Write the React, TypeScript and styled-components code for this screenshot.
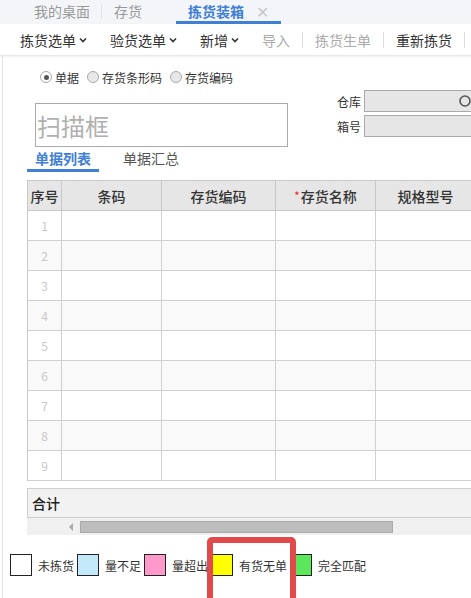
import styled, { createGlobalStyle } from "styled-components";

const GlobalStyle = createGlobalStyle`
  html, body {
    margin: 0;
    padding: 0;
    background: #fff;
  }
  body {
    font-family: "Noto Sans CJK SC", "Noto Sans", sans-serif;
    color: #333;
    width: 471px;
    height: 598px;
    overflow: hidden;
  }
`;

const Page = styled.div`
  position: relative;
  width: 471px;
  height: 598px;
  overflow: hidden;
`;

const TabBar = styled.div`
  height: 24px;
  background: #f3f5f9;
  display: flex;
  align-items: stretch;
  padding-left: 22px;
  font-size: 14px;
`;

const Tab = styled.div<{ $active?: boolean; $sep?: boolean }>`
  display: flex;
  align-items: center;
  gap: 12px;
  padding: 0 12px;
  line-height: 20px;
  color: ${(p) => (p.$active ? "#3f7fd6" : "#999")};
  font-weight: ${(p) => (p.$active ? 700 : 400)};
  border-bottom: 3px solid ${(p) => (p.$active ? "#3f7fd6" : "transparent")};
  position: relative;
  ${(p) =>
    p.$sep &&
    `&::after {
      content: "";
      position: absolute;
      right: 0;
      top: 3px;
      height: 16px;
      border-right: 1px solid #e2e4e8;
    }`}
`;

const TabGap = styled.div`
  width: 22px;
`;

const TabClose = styled.span`
  color: #c8c8c8;
  font-weight: 400;
  font-size: 16px;
`;

const Toolbar = styled.div`
  height: 31px;
  display: flex;
  align-items: center;
  padding-left: 20px;
  gap: 22px;
  font-size: 14px;
  border-bottom: 1px solid #e8e8e8;
  box-shadow: 0 1px 2px rgba(0, 0, 0, 0.06);
`;

const ToolItem = styled.div<{ $disabled?: boolean }>`
  display: flex;
  align-items: center;
  gap: 2px;
  color: ${(p) => (p.$disabled ? "#aaa" : "#333")};
`;

const ToolSep = styled.div`
  width: 1px;
  height: 16px;
  background: #ddd;
  margin: 0 -10px;
`;

const Content = styled.div`
  margin-left: 2px;
  border-left: 1px solid #e2e2e2;
  height: 542px;
`;

const TopSection = styled.div`
  display: flex;
  padding-left: 32px;
`;

const LeftCol = styled.div`
  width: 253px;
  padding-top: 13px;
`;

const RadioRow = styled.div`
  display: flex;
  align-items: center;
  padding-left: 5px;
  gap: 8px;
  font-size: 12px;
  height: 16px;
`;

const RadioItem = styled.label`
  display: flex;
  align-items: center;
  gap: 3px;
  color: #333;
`;

const RadioDot = styled.span<{ $checked?: boolean }>`
  width: 10px;
  height: 10px;
  border-radius: 50%;
  border: 1px solid #a8a8a8;
  background: ${(p) => (p.$checked ? "#fff" : "#e8e8e8")};
  display: flex;
  align-items: center;
  justify-content: center;
  &::after {
    content: "";
    width: 5px;
    height: 5px;
    border-radius: 50%;
    background: ${(p) => (p.$checked ? "#555" : "transparent")};
  }
`;

const ScanBox = styled.div`
  margin-top: 18px;
  height: 42px;
  border: 1px solid #aaa;
  display: flex;
  align-items: center;
  padding-left: 1px;
  font-size: 24px;
  color: #b0b0b0;
`;

const RightCol = styled.div`
  margin-left: 49px;
  padding-top: 34px;
  display: flex;
  flex-direction: column;
  gap: 3px;
  flex: 1;
`;

const FieldRow = styled.div`
  display: flex;
  align-items: center;
  gap: 3px;
  font-size: 12px;
  color: #333;
`;

const FieldInput = styled.div`
  flex: 1;
  height: 20px;
  background: #e6e6e6;
  border: 1px solid #aaa;
  border-right: none;
  display: flex;
  align-items: center;
  justify-content: flex-end;
`;

const SubTabs = styled.div`
  display: flex;
  margin-left: 24px;
  margin-top: 3px;
  gap: 16px;
  font-size: 14px;
`;

const SubTab = styled.div<{ $active?: boolean }>`
  padding: 0 8px;
  height: 19px;
  line-height: 17px;
  color: ${(p) => (p.$active ? "#3f7fd6" : "#555")};
  font-weight: ${(p) => (p.$active ? 700 : 400)};
  border-bottom: 3px solid ${(p) => (p.$active ? "#3f7fd6" : "transparent")};
`;

const TableWrap = styled.div`
  margin-left: 24px;
  margin-top: 8px;
  overflow: hidden;
`;

const Grid = styled.div`
  width: 520px;
  display: grid;
  grid-template-columns: 34px 100px 114px 100px 100px 72px;
  border-left: 1px solid #c8c8c8;
  border-top: 1px solid #c8c8c8;
`;

const HeadCell = styled.div`
  height: 29px;
  background: #e6e6e6;
  border-right: 1px solid #c8c8c8;
  border-bottom: 1px solid #c8c8c8;
  display: flex;
  align-items: center;
  justify-content: center;
  font-size: 14px;
  font-weight: 500;
  color: #333;
`;

const Star = styled.span`
  color: #e33;
  font-size: 11px;
  margin-right: 1px;
  align-self: flex-start;
  margin-top: 6px;
`;

const Cell = styled.div<{ $even?: boolean }>`
  height: 29px;
  background: ${(p) => (p.$even ? "#f9f9f9" : "#fff")};
  border-right: 1px solid #d0d0d0;
  border-bottom: 1px solid #d0d0d0;
  display: flex;
  align-items: center;
  justify-content: center;
  font-size: 12px;
  color: #c8c8c8;
`;

const TotalRow = styled.div`
  margin-top: 7px;
  height: 28px;
  width: 520px;
  background: #f2f2f2;
  border: 1px solid #d0d0d0;
  display: flex;
  align-items: center;
  padding-left: 4px;
  font-size: 14px;
  font-weight: 500;
  color: #222;
`;

const ScrollTrack = styled.div`
  height: 17px;
  width: 520px;
  background: #f0f0f0;
  display: flex;
  align-items: center;
  padding-left: 42px;
  gap: 7px;
`;

const ScrollArrow = styled.span`
  width: 0;
  height: 0;
  border-top: 4px solid transparent;
  border-bottom: 4px solid transparent;
  border-right: 4px solid #a8a8a8;
`;

const ScrollThumb = styled.div`
  width: 313px;
  height: 12px;
  background: #bdbdbd;
  border: 1px solid #aaa;
  box-sizing: border-box;
`;

const Legend = styled.div`
  margin-top: 19px;
  margin-left: 7px;
  display: flex;
  align-items: center;
  font-size: 12px;
  color: #333;
`;

const LegendItem = styled.div`
  display: flex;
  align-items: center;
  margin-right: 3px;
`;

const Swatch = styled.span<{ $color: string }>`
  width: 20px;
  height: 20px;
  border: 1px solid #222;
  background: ${(p) => p.$color};
  margin-right: 6px;
`;

const Highlight = styled.div`
  position: absolute;
  left: 207px;
  top: 537px;
  width: 77px;
  height: 70px;
  border: 6px solid #e04a4a;
  border-radius: 5px;
`;

const Chevron = () => (
  <svg width="10" height="10" viewBox="0 0 10 10">
    <path d="M2 3.5 L5 6.5 L8 3.5" fill="none" stroke="#333" strokeWidth="1.6" />
  </svg>
);

const SearchIcon = () => (
  <svg width="14" height="16" viewBox="0 0 14 16">
    <circle cx="8" cy="8" r="5" fill="none" stroke="#555" strokeWidth="1.6" />
  </svg>
);

const columns = ["序号", "条码", "存货编码", "存货名称", "规格型号", ""];
const legend = [
  { color: "#fff", label: "未拣货" },
  { color: "#c4e9fb", label: "量不足" },
  { color: "#ff99cc", label: "量超出" },
  { color: "#ffff00", label: "有货无单" },
  { color: "#5ce65c", label: "完全匹配" },
];

export default function App() {
  const rows = Array.from({ length: 9 }, (_, i) => i + 1);
  return (
    <Page>
      <GlobalStyle />
      <TabBar>
        <Tab $sep>我的桌面</Tab>
        <Tab>存货</Tab>
        <TabGap />
        <Tab $active>
          拣货装箱<TabClose>✕</TabClose>
        </Tab>
      </TabBar>
      <Toolbar>
        <ToolItem>
          拣货选单<Chevron />
        </ToolItem>
        <ToolItem>
          验货选单<Chevron />
        </ToolItem>
        <ToolItem>
          新增<Chevron />
        </ToolItem>
        <ToolItem $disabled>导入</ToolItem>
        <ToolSep />
        <ToolItem $disabled>拣货生单</ToolItem>
        <ToolSep />
        <ToolItem>重新拣货</ToolItem>
        <ToolSep />
      </Toolbar>
      <Content>
        <TopSection>
          <LeftCol>
            <RadioRow>
              <RadioItem>
                <RadioDot $checked />
                单据
              </RadioItem>
              <RadioItem>
                <RadioDot />
                存货条形码
              </RadioItem>
              <RadioItem>
                <RadioDot />
                存货编码
              </RadioItem>
            </RadioRow>
            <ScanBox>扫描框</ScanBox>
          </LeftCol>
          <RightCol>
            <FieldRow>
              仓库
              <FieldInput>
                <SearchIcon />
              </FieldInput>
            </FieldRow>
            <FieldRow>
              箱号
              <FieldInput />
            </FieldRow>
          </RightCol>
        </TopSection>
        <SubTabs>
          <SubTab $active>单据列表</SubTab>
          <SubTab>单据汇总</SubTab>
        </SubTabs>
        <TableWrap>
          <Grid>
            {columns.map((c, i) => (
              <HeadCell key={i}>
                {c === "存货名称" && <Star>*</Star>}
                {c}
              </HeadCell>
            ))}
            {rows.map((r) =>
              columns.map((_, ci) => (
                <Cell key={`${r}-${ci}`} $even={r % 2 === 0}>
                  {ci === 0 ? r : ""}
                </Cell>
              ))
            )}
          </Grid>
          <TotalRow>合计</TotalRow>
          <ScrollTrack>
            <ScrollArrow />
            <ScrollThumb />
          </ScrollTrack>
        </TableWrap>
        <Legend>
          {legend.map((l) => (
            <LegendItem key={l.label}>
              <Swatch $color={l.color} />
              {l.label}
            </LegendItem>
          ))}
        </Legend>
      </Content>
      <Highlight />
    </Page>
  );
}
